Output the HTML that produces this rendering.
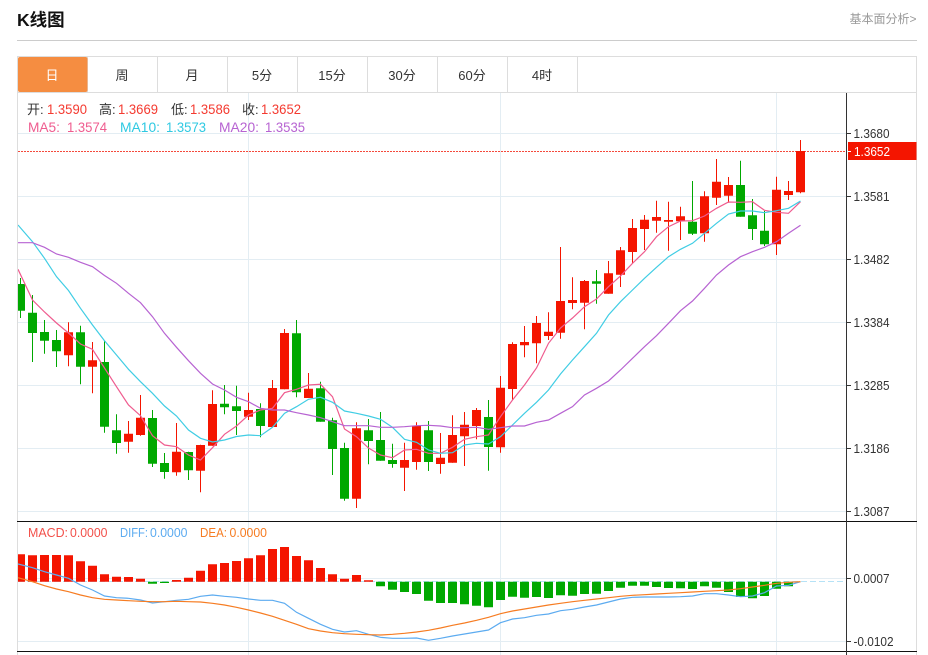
<!DOCTYPE html>
<html><head><meta charset="utf-8"><title>K线图</title>
<style>
html,body{margin:0;padding:0;background:#fff}
svg{display:block;position:absolute;left:0;top:0}
text{font-family:"Liberation Sans","Noto Sans CJK SC",sans-serif}
</style></head>
<body>
<svg width="928" height="655" viewBox="0 0 928 655" xmlns="http://www.w3.org/2000/svg">
<defs><clipPath id="c"><rect x="18" y="93" width="828" height="562"/></clipPath></defs>
<text x="17" y="26" font-size="17.5" font-weight="700" fill="#111">K线图</text>
<text x="849.5" y="23" font-size="12" fill="#999">基本面分析&gt;</text>
<path d="M17 40.5H917" stroke="#ccc" fill="none"/>
<path d="M17 56.5H916.5M17 92.5H916.5M17.5 56V655M916.5 56V655M87.5 57V92M157.5 57V92M227.5 57V92M297.5 57V92M367.5 57V92M437.5 57V92M507.5 57V92M577.5 57V92" stroke="#ddd" fill="none"/>
<rect x="18" y="57" width="69.5" height="35" rx="2" fill="#f58d41"/>
<g font-size="13" fill="#333" text-anchor="middle">
<text x="52" y="80" fill="#fff">日</text><text x="122" y="80">周</text><text x="192" y="80">月</text><text x="262" y="80">5分</text><text x="332" y="80">15分</text><text x="402" y="80">30分</text><text x="472" y="80">60分</text><text x="542" y="80">4时</text>
</g>
<path d="M18 133.5H846M18 196.5H846M18 259.5H846M18 322.5H846M18 385.5H846M18 448.5H846M18 511.5H846M18 578.5H846M18 641.5H846M248.5 93V655M500.5 93V655M776.5 93V655" stroke="#e3edf3" fill="none"/>
<path d="M18 151.5H846" stroke="#f44a3c" stroke-dasharray="2 1" fill="none"/>
<g clip-path="url(#c)">
<path fill="none" stroke="#00a800" d="M20.5 278V318M32.5 295V362M44.5 320V353.7M56.5 330V367M80.5 325.7V384.3M104.5 340.7V432.7M116.5 414.3V453.7M152.5 410V467M164.5 453V478.7M188.5 451.7V480M224.5 385V414.3M236.5 385.7V435M260.5 403.3V437.3M296.5 320V397.3M320.5 381.7V421.7M332.5 417.7V475M344.5 442.7V500.7M368.5 419V464.3M380.5 412V460.7M392.5 443.7V467.7M428.5 421V471M488.5 400V470.7M596.5 270V303.7M692.5 181V235M740.5 160.7V216.7M752.5 199V240M764.5 210.7V246"/>
<path fill="none" stroke="#f41500" d="M68.5 322.3V366.3M92.5 342V393.3M128.5 421V452.7M140.5 395V435.7M176.5 423V475.7M200.5 444.7V492.3M212.5 390.3V445.7M248.5 392.7V420M272.5 380V427M284.5 329V389.3M308.5 373V398M356.5 422.3V508M404.5 442.7V491M416.5 422.3V469.7M440.5 433V473.7M452.5 415.3V462.7M464.5 412V466M476.5 408V439.3M500.5 376V452.7M512.5 342.3V400M524.5 326V357.3M536.5 316V363.3M548.5 312.3V340M560.5 247V338.7M572.5 277.3V309.3M584.5 280V329.3M608.5 261V293.7M620.5 247V287M632.5 219V263.3M644.5 215V250M656.5 200.7V232.7M668.5 201.7V250.7M680.5 206.7V240M704.5 191.3V241.7M716.5 159V205M728.5 177V202.7M776.5 176.7V255M788.5 181V200M800.5 140V193.3"/>
<path fill="#00a800" d="M16 284h9V310.7h-9zM28 312.7h9V333h-9zM40 332h9V340.7h-9zM52 340h9V351.3h-9zM76 332.3h9V366.7h-9zM100 362h9V426.7h-9zM112 430.3h9V443h-9zM148 418h9V463.7h-9zM160 463h9V472h-9zM184 452h9V470.3h-9zM220 403.7h9V407.3h-9zM232 406.3h9V411h-9zM256 409h9V426h-9zM292 333.3h9V392.3h-9zM316 388.3h9V421.7h-9zM328 420.3h9V449h-9zM340 448h9V498.7h-9zM364 430.3h9V441h-9zM376 440h9V460.7h-9zM388 460h9V464h-9zM424 430.3h9V462h-9zM484 417h9V447h-9zM592 281.3h9V283.7h-9zM688 221.7h9V233.7h-9zM736 185h9V216.7h-9zM748 215.3h9V229h-9zM760 230.7h9V244.3h-9z"/>
<path fill="#f41500" d="M64 332.3h9V355.3h-9zM88 360.3h9V366.7h-9zM124 433.7h9V441.7h-9zM136 417.7h9V435h-9zM172 451.7h9V472.3h-9zM196 445h9V470.7h-9zM208 404h9V445.7h-9zM244 410h9V416.7h-9zM268 388h9V427h-9zM280 333h9V389.3h-9zM304 388.7h9V398h-9zM352 428.3h9V498.7h-9zM400 460h9V467.7h-9zM412 425.7h9V462h-9zM436 457.7h9V464h-9zM448 435h9V462.7h-9zM460 424.7h9V436.3h-9zM472 410h9V426h-9zM496 387.7h9V447.3h-9zM508 344h9V389h-9zM520 342h9V345.3h-9zM532 323h9V343.3h-9zM544 331.7h9V336h-9zM556 301h9V332.7h-9zM568 300h9V303h-9zM580 281h9V302.7h-9zM604 273.3h9V293.7h-9zM616 250.3h9V274.7h-9zM628 228h9V252h-9zM640 219.7h9V229h-9zM652 217h9V220.7h-9zM664 220h9V221.7h-9zM676 216.3h9V221.3h-9zM700 196.3h9V233.3h-9zM712 181.7h9V197.7h-9zM724 185h9V195.7h-9zM772 189.7h9V244.3h-9zM784 191h9V195h-9zM796 151h9V192.3h-9z"/>
<polyline fill="none" stroke-width="1.2" stroke="#ef5c8f" points="18,269.3 32.5,300 44.5,312 56.5,323 68.5,333 80.5,344 92.5,349.3 104.5,368 116.5,386.7 128.5,405 140.5,415.7 152.5,435.7 164.5,445 176.5,446.7 188.5,455 200.5,460 212.5,447.7 224.5,434.3 236.5,426 248.5,415 260.5,410 272.5,408.3 284.5,392.7 296.5,389.3 308.5,385 320.5,384.3 332.5,396.7 344.5,429 356.5,436.7 368.5,448 380.5,455 392.5,457.7 404.5,450 416.5,449.3 428.5,453.3 440.5,453.3 452.5,447.3 464.5,439.3 476.5,436.7 488.5,435 500.5,416.7 512.5,400 524.5,385 536.5,368 548.5,343.3 560.5,328 572.5,318 584.5,306.7 596.5,299 608.5,286.7 620.5,276 632.5,263.3 644.5,251.7 656.5,236.7 668.5,226.7 680.5,221 692.5,220.7 704.5,216 716.5,208.3 728.5,202 740.5,202.3 752.5,201.7 764.5,210.3 776.5,212.3 788.5,213.3 800.5,201.7"/>
<polyline fill="none" stroke-width="1.2" stroke="#40cde4" points="18,225 32.5,241.7 44.5,258.3 56.5,276.7 68.5,290.5 80.5,308.3 92.5,325 104.5,340.7 116.5,355 128.5,369.3 140.5,381.7 152.5,393.3 164.5,406 176.5,416 188.5,430 200.5,438.3 212.5,442 224.5,440 236.5,436.5 248.5,435 260.5,435.7 272.5,427.3 284.5,413.3 296.5,406.7 308.5,399.3 320.5,397.3 332.5,402.3 344.5,411 356.5,413.3 368.5,416 380.5,419.3 392.5,427.3 404.5,439.3 416.5,442.3 428.5,450 440.5,453.3 452.5,452.7 464.5,445 476.5,443.3 488.5,444 500.5,436.7 512.5,425 524.5,413.3 536.5,402.3 548.5,390 560.5,374 572.5,360 584.5,346.7 596.5,333.3 608.5,315 620.5,301.7 632.5,290 644.5,278.3 656.5,267.3 668.5,256.7 680.5,249.3 692.5,243.3 704.5,233.3 716.5,223.3 728.5,214 740.5,211 752.5,211 764.5,212.7 776.5,210.7 788.5,208.3 800.5,201"/>
<polyline fill="none" stroke-width="1.2" stroke="#b763d2" points="18,242.7 32.5,242.7 44.5,247.3 56.5,254 68.5,257.3 80.5,262.3 92.5,266.7 104.5,275.5 116.5,283.3 128.5,293.3 140.5,302.7 152.5,316.7 164.5,333.3 176.5,347.3 188.5,360.7 200.5,373.3 212.5,384 224.5,390 236.5,397.3 248.5,401.7 260.5,408.3 272.5,410 284.5,410 296.5,412.7 308.5,415 320.5,417.7 332.5,421.7 344.5,425.7 356.5,425.7 368.5,425.7 380.5,427.3 392.5,427.3 404.5,426.7 416.5,425.7 428.5,425.3 440.5,426 452.5,427.7 464.5,427.7 476.5,427.3 488.5,429.3 500.5,427.7 512.5,426 524.5,426 536.5,422.3 548.5,420 560.5,413.3 572.5,406.7 584.5,395 596.5,388.3 608.5,381 620.5,370 632.5,358.3 644.5,346.7 656.5,335.7 668.5,323.3 680.5,310.7 692.5,301 704.5,288.3 716.5,275 728.5,265 740.5,256.7 752.5,251.7 764.5,247.3 776.5,241.7 788.5,233.3 800.5,225.3"/>
<path d="M18 581.5H846" stroke="#b5e2f6" stroke-dasharray="6 3" fill="none"/>
<path fill="#f41500" d="M16 554.3h9V581.7h-9zM28 555.3h9V581.7h-9zM40 555h9V581.7h-9zM52 555h9V581.7h-9zM64 555.3h9V581.7h-9zM76 561.3h9V581.7h-9zM88 565.7h9V581.7h-9zM100 574.3h9V581.7h-9zM112 576.7h9V581.7h-9zM124 577h9V581.7h-9zM136 578.7h9V581.7h-9zM172 580h9V581.7h-9zM184 577.7h9V581.7h-9zM196 570.7h9V581.7h-9zM208 564.3h9V581.7h-9zM220 563h9V581.7h-9zM232 561h9V581.7h-9zM244 558.3h9V581.7h-9zM256 555.3h9V581.7h-9zM268 549h9V581.7h-9zM280 547h9V581.7h-9zM292 556h9V581.7h-9zM304 560.3h9V581.7h-9zM316 568h9V581.7h-9zM328 574.3h9V581.7h-9zM340 578.7h9V581.7h-9zM352 575h9V581.7h-9zM364 580.3h9V581.7h-9z"/>
<path fill="#00a800" d="M148 581.7h9V583.7h-9zM160 581.7h9V583h-9zM376 581.7h9V586.3h-9zM388 581.7h9V589.7h-9zM400 581.7h9V592h-9zM412 581.7h9V594h-9zM424 581.7h9V600.7h-9zM436 581.7h9V603h-9zM448 581.7h9V603h-9zM460 581.7h9V604.3h-9zM472 581.7h9V605.7h-9zM484 581.7h9V607.3h-9zM496 581.7h9V600h-9zM508 581.7h9V596.7h-9zM520 581.7h9V597.7h-9zM532 581.7h9V597h-9zM544 581.7h9V598h-9zM556 581.7h9V595.3h-9zM568 581.7h9V595.7h-9zM580 581.7h9V594h-9zM592 581.7h9V593.7h-9zM604 581.7h9V591h-9zM616 581.7h9V587.7h-9zM628 581.7h9V585.7h-9zM640 581.7h9V585.7h-9zM652 581.7h9V587h-9zM664 581.7h9V588h-9zM676 581.7h9V588.3h-9zM688 581.7h9V589h-9zM700 581.7h9V586.3h-9zM712 581.7h9V587.7h-9zM724 581.7h9V592h-9zM736 581.7h9V597h-9zM748 581.7h9V598.3h-9zM760 581.7h9V596h-9zM772 581.7h9V588.7h-9zM784 581.7h9V586.3h-9z"/>
<polyline fill="none" stroke-width="1.2" stroke="#5cabf0" points="18,564 32.5,567.7 44.5,571.7 56.5,575 68.5,578.3 80.5,585 92.5,590 104.5,596 116.5,597.7 128.5,598.3 140.5,600 152.5,603 164.5,601.7 176.5,600.3 188.5,599.3 200.5,596.3 212.5,595 224.5,596.3 236.5,597.3 248.5,599 260.5,600.3 272.5,600.3 284.5,603.3 296.5,612.3 308.5,618.3 320.5,624.3 332.5,629.3 344.5,632 356.5,630.7 368.5,634.3 380.5,637.3 392.5,638.3 404.5,638.3 416.5,638 428.5,640.3 440.5,638.3 452.5,636 464.5,634 476.5,632 488.5,630 500.5,622.7 512.5,619 524.5,617.7 536.5,615.3 548.5,614 560.5,610.7 572.5,609.3 584.5,607 596.5,605 608.5,602 620.5,599 632.5,597.3 644.5,597 656.5,597 668.5,597 680.5,596.7 692.5,596 704.5,593.7 716.5,593.7 728.5,595 740.5,596.7 752.5,596 764.5,592.7 776.5,586 788.5,585.3 800.5,581.7"/>
<polyline fill="none" stroke-width="1.2" stroke="#f67c22" points="18,577.7 32.5,581.7 44.5,585.7 56.5,589 68.5,591.7 80.5,595 92.5,597.7 104.5,599.3 116.5,600 128.5,600.7 140.5,601.3 152.5,601.7 164.5,601.7 176.5,601.3 188.5,601.7 200.5,602 212.5,603.3 224.5,605 236.5,607.3 248.5,610 260.5,613 272.5,616.3 284.5,620.3 296.5,624.3 308.5,628.7 320.5,631 332.5,632.7 344.5,633.7 356.5,634.3 368.5,634.7 380.5,635 392.5,634.3 404.5,633.3 416.5,632 428.5,630.3 440.5,628 452.5,625.3 464.5,623 476.5,620.3 488.5,617.3 500.5,613.7 512.5,611 524.5,609 536.5,607 548.5,605 560.5,603.3 572.5,601.7 584.5,600.3 596.5,599 608.5,597.7 620.5,596.3 632.5,595.3 644.5,594.7 656.5,594 668.5,593.3 680.5,592.7 692.5,592 704.5,591.3 716.5,590.7 728.5,590 740.5,588.7 752.5,587 764.5,585.3 776.5,583.3 788.5,582.3 800.5,581.7"/>
</g>
<path d="M17 521.5H917M17 651.5H917" stroke="#111" fill="none"/>
<path d="M846.5 93V655" stroke="#333" fill="none"/>
<path d="M847 133.5H851M847 196.5H851M847 259.5H851M847 322.5H851M847 385.5H851M847 448.5H851M847 511.5H851M847 578.5H851M847 641.5H851" stroke="#333" fill="none"/>
<rect x="848" y="142" width="68.5" height="18" fill="#f41500"/>
<path d="M848 151.5H851" stroke="#fff" fill="none"/>
<g font-size="13" fill="#333">
<text x="853.5" y="138" textLength="36" lengthAdjust="spacingAndGlyphs">1.3680</text>
<text x="854" y="156" textLength="36" lengthAdjust="spacingAndGlyphs" fill="#fff">1.3652</text>
<text x="853.5" y="201" textLength="36" lengthAdjust="spacingAndGlyphs">1.3581</text>
<text x="853.5" y="264" textLength="36" lengthAdjust="spacingAndGlyphs">1.3482</text>
<text x="853.5" y="327" textLength="36" lengthAdjust="spacingAndGlyphs">1.3384</text>
<text x="853.5" y="390" textLength="36" lengthAdjust="spacingAndGlyphs">1.3285</text>
<text x="853.5" y="453" textLength="36" lengthAdjust="spacingAndGlyphs">1.3186</text>
<text x="853.5" y="516" textLength="36" lengthAdjust="spacingAndGlyphs">1.3087</text>
<text x="853.5" y="583" textLength="36" lengthAdjust="spacingAndGlyphs">0.0007</text>
<text x="853.5" y="646" textLength="40" lengthAdjust="spacingAndGlyphs">-0.0102</text>
</g>
<g font-size="13.5">
<g fill="#333" font-size="13"><text x="27" y="114">开:</text><text x="99" y="114">高:</text><text x="171" y="114">低:</text><text x="242" y="114">收:</text></g>
<g fill="#f43a30">
<text x="47" y="114" textLength="40" lengthAdjust="spacingAndGlyphs">1.3590</text>
<text x="118" y="114" textLength="40" lengthAdjust="spacingAndGlyphs">1.3669</text>
<text x="190" y="114" textLength="40" lengthAdjust="spacingAndGlyphs">1.3586</text>
<text x="261" y="114" textLength="40" lengthAdjust="spacingAndGlyphs">1.3652</text>
</g>
<g fill="#ef5c8f"><text x="28" y="132" textLength="32" lengthAdjust="spacingAndGlyphs">MA5:</text><text x="67" y="132" textLength="40" lengthAdjust="spacingAndGlyphs">1.3574</text></g>
<g fill="#2ec9e2"><text x="120" y="132" textLength="40" lengthAdjust="spacingAndGlyphs">MA10:</text><text x="166" y="132" textLength="40" lengthAdjust="spacingAndGlyphs">1.3573</text></g>
<g fill="#b763d2"><text x="219" y="132" textLength="40" lengthAdjust="spacingAndGlyphs">MA20:</text><text x="265" y="132" textLength="40" lengthAdjust="spacingAndGlyphs">1.3535</text></g>
</g>
<g font-size="12.5">
<g fill="#f2504a"><text x="28" y="537" textLength="40" lengthAdjust="spacingAndGlyphs">MACD:</text><text x="70" y="537" textLength="37.5" lengthAdjust="spacingAndGlyphs">0.0000</text></g>
<g fill="#5cabf0"><text x="120" y="537" textLength="28" lengthAdjust="spacingAndGlyphs">DIFF:</text><text x="150" y="537" textLength="37.5" lengthAdjust="spacingAndGlyphs">0.0000</text></g>
<g fill="#f67c22"><text x="200" y="537" textLength="27" lengthAdjust="spacingAndGlyphs">DEA:</text><text x="229.5" y="537" textLength="37.5" lengthAdjust="spacingAndGlyphs">0.0000</text></g>
</g>
</svg>
</body></html>
